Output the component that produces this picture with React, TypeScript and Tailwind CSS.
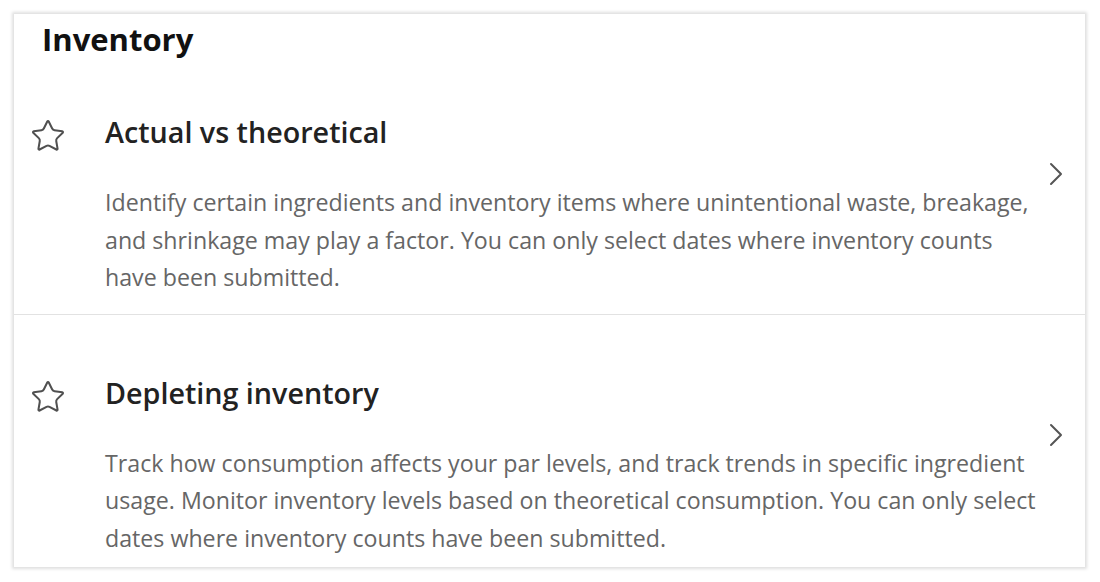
import React from "react";
import { Star } from "lucide-react";

interface ReportRowProps {
  title: string;
  description: string;
  last?: boolean;
}

const ReportRow: React.FC<ReportRowProps> = ({ title, description, last }) => {
  return (
    <div className={`flex pl-4 pr-[22px] pt-[60px] pb-[17px] ${last ? "" : "border-b border-[#e2e2e2]"}`}>
      <Star size={36} strokeWidth={1.35} className="mt-1 shrink-0 text-[#505050]" />
      <div className="ml-[39px] flex-1">
        <h3 className="text-[28.7px] leading-[36px] font-semibold text-[#222]">{title}</h3>
        <p className="mt-[34px] max-w-[936px] text-[23.2px] leading-[37.5px] text-[#666]">{description}</p>
      </div>
      <svg width="14" height="24" viewBox="0 0 14 24" className="mt-[48px] shrink-0 text-[#555]">
        <polyline points="2,2 12,12 2,22" fill="none" stroke="currentColor" strokeWidth="2" strokeLinecap="round" strokeLinejoin="round" />
      </svg>
    </div>
  );
};

export default function App() {
  return (
    <div className="min-h-[582px] bg-white pt-[14px] pl-[14px]" style={{ fontFamily: '"Open Sans", sans-serif' }}>
      <div className="h-[553px] w-[1071px] overflow-hidden bg-white shadow-[0_0_3px_2px_rgba(0,0,0,0.13)]">
        <div className="pt-[11px] pl-[28px] text-[31px] leading-[29px] font-bold text-[#111]">Inventory</div>
        <ReportRow
          title="Actual vs theoretical"
          description="Identify certain ingredients and inventory items where unintentional waste, breakage, and shrinkage may play a factor. You can only select dates where inventory counts have been submitted."
        />
        <ReportRow
          title="Depleting inventory"
          description="Track how consumption affects your par levels, and track trends in specific ingredient usage. Monitor inventory levels based on theoretical consumption. You can only select dates where inventory counts have been submitted."
          last
        />
      </div>
    </div>
  );
}
